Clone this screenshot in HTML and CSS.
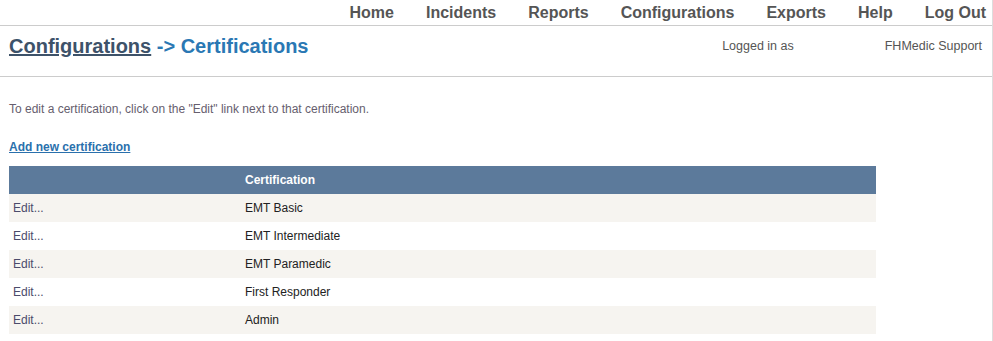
FILE: index.html
```html
<!DOCTYPE html>
<html lang="en">
<head>
  <meta charset="UTF-8">
  <title>Certifications</title>
  <link rel="stylesheet" href="styles.css">
</head>
<body>

<div class="page">

  <!-- Top menu -->
  <div class="menu">
    <a href="#">Home</a>
    <a href="#">Incidents</a>
    <a href="#">Reports</a>
    <a href="#">Configurations</a>
    <a href="#">Exports</a>
    <a href="#">Help</a>
    <a href="#">Log Out</a>
  </div>

  <!-- Page title -->
  <div class="header">
    <h1><a href="#" class="crumb">Configurations</a> <span class="current">-&gt; Certifications</span></h1>
    <div class="login">
      <span>Logged in as</span>
      <span class="user">FHMedic Support</span>
    </div>
  </div>

  <div class="content">
    <p class="note">To edit a certification, click on the "Edit" link next to that certification.</p>
    <a href="#" class="add-link">Add new certification</a>

    <table class="grid">
      <tr>
        <th class="col-edit"></th>
        <th>Certification</th>
      </tr>
      <tr class="alt"><td><a href="#">Edit...</a></td><td>EMT Basic</td></tr>
      <tr><td><a href="#">Edit...</a></td><td>EMT Intermediate</td></tr>
      <tr class="alt"><td><a href="#">Edit...</a></td><td>EMT Paramedic</td></tr>
      <tr><td><a href="#">Edit...</a></td><td>First Responder</td></tr>
      <tr class="alt"><td><a href="#">Edit...</a></td><td>Admin</td></tr>
    </table>
  </div>
</div>

</body>
</html>
```

FILE: styles.css
```css
body {
  margin: 0;
  font-family: "Liberation Sans", Arial, sans-serif;
  background-color: #fff;
}

.page {
  width: 992px;
  min-height: 341px;
  border-right: 1px solid #ddd;
}

.menu {
  display: flex;
  justify-content: flex-end;
  gap: 32px;
  height: 25px;
  padding-right: 6px;
  border-bottom: 1px solid #ccc;
}

.menu a {
  font-size: 16px;
  font-weight: bold;
  line-height: 25px;
  color: #555;
  text-decoration: none;
}

.header {
  display: flex;
  justify-content: space-between;
  height: 50px;
  padding: 0 10px 0 9px;
  border-bottom: 1px solid #ccc;
}

h1 {
  margin: 0;
  padding-top: 8px;
  font-size: 20px;
  line-height: 24px;
}

.crumb {
  color: #3d5269;
}

.current {
  color: #2a78b4;
}

.login {
  display: flex;
  gap: 91px;
  padding-top: 13px;
  font-size: 12.5px;
  color: #555;
}

.content {
  padding-left: 9px;
}

.note {
  margin: 0;
  padding-top: 25px;
  font-size: 12px;
  line-height: 15px;
  color: #665e6e;
}

.add-link {
  display: inline-block;
  margin-top: 23px;
  font-size: 12px;
  font-weight: bold;
  line-height: 14px;
  color: #2a70ac;
}

.grid {
  width: 867px;
  margin-top: 11px;
  border-collapse: collapse;
  font-size: 12px;
}

.grid th {
  height: 28px;
  padding: 0 4px;
  background-color: #5c7a9b;
  color: #fff;
  text-align: left;
}

.grid .col-edit {
  width: 224px;
}

.grid td {
  height: 28px;
  padding: 0 4px;
  color: #222;
}

.grid td a {
  color: #4b4b6b;
  text-decoration: none;
}

.grid .alt td {
  background-color: #f6f4f0;
}
```
